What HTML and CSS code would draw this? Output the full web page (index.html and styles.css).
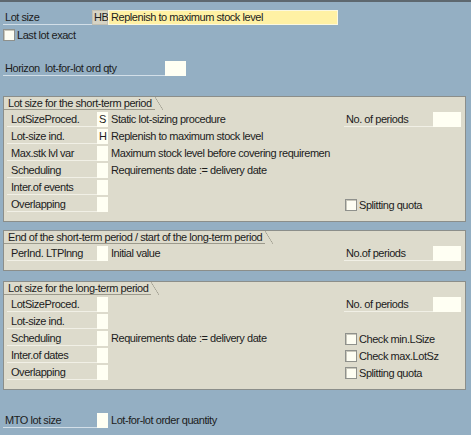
FILE: index.html
```html
<!DOCTYPE html>
<html>
<head>
<meta charset="utf-8">
<link rel="stylesheet" href="styles.css">
</head>
<body>
<div class="topbar"></div>

<div class="hrow r-lotsize">
  <div class="hlabel w-lot">Lot size</div>
  <div class="field ro">HB</div>
  <div class="field yellow">Replenish to maximum stock level</div>
</div>

<div class="hrow r-last">
  <span class="cb"></span><span class="cbtext">Last lot exact</span>
</div>

<div class="hrow r-horizon">
  <div class="hlabel w-hor">Horizon  lot-for-lot ord qty</div>
  <div class="field in w-hin"></div>
</div>

<section class="panel p1">
  <div class="ptitle"><span class="tab">Lot size for the short-term period</span></div>
  <div class="prow">
    <div class="plabel">LotSizeProced.</div><div class="field in">S</div><div class="desc">Static lot-sizing procedure</div>
    <div class="plabel rlabel">No. of periods</div><div class="field in"></div>
  </div>
  <div class="prow">
    <div class="plabel">Lot-size ind.</div><div class="field in">H</div><div class="desc">Replenish to maximum stock level</div>
  </div>
  <div class="prow">
    <div class="plabel">Max.stk lvl var</div><div class="field in"></div><div class="desc">Maximum stock level before covering requiremen</div>
  </div>
  <div class="prow">
    <div class="plabel">Scheduling</div><div class="field in"></div><div class="desc">Requirements date := delivery date</div>
  </div>
  <div class="prow">
    <div class="plabel">Inter.of events</div><div class="field in"></div><div class="desc"></div>
  </div>
  <div class="prow">
    <div class="plabel">Overlapping</div><div class="field in"></div><div class="desc"></div>
    <div class="check"><span class="cb"></span><span class="cbtext">Splitting quota</span></div>
  </div>
</section>

<section class="panel p2">
  <div class="ptitle"><span class="tab">End of the short-term period / start of the long-term period</span></div>
  <div class="prow">
    <div class="plabel">PerInd. LTPlnng</div><div class="field in"></div><div class="desc">Initial value</div>
    <div class="plabel rlabel">No.of periods</div><div class="field in"></div>
  </div>
</section>

<section class="panel p3">
  <div class="ptitle"><span class="tab">Lot size for the long-term period</span></div>
  <div class="prow">
    <div class="plabel">LotSizeProced.</div><div class="field in"></div><div class="desc"></div>
    <div class="plabel rlabel">No. of periods</div><div class="field in"></div>
  </div>
  <div class="prow">
    <div class="plabel">Lot-size ind.</div><div class="field in"></div><div class="desc"></div>
  </div>
  <div class="prow">
    <div class="plabel">Scheduling</div><div class="field in"></div><div class="desc">Requirements date := delivery date</div>
    <div class="check"><span class="cb"></span><span class="cbtext">Check min.LSize</span></div>
  </div>
  <div class="prow">
    <div class="plabel">Inter.of dates</div><div class="field in"></div><div class="desc"></div>
    <div class="check"><span class="cb"></span><span class="cbtext">Check max.LotSz</span></div>
  </div>
  <div class="prow">
    <div class="plabel">Overlapping</div><div class="field in"></div><div class="desc"></div>
    <div class="check"><span class="cb"></span><span class="cbtext">Splitting quota</span></div>
  </div>
</section>

<div class="hrow r-mto">
  <div class="hlabel w-mto">MTO lot size</div>
  <div class="field in w-mtoin"></div>
  <div class="desc">Lot-for-lot order quantity</div>
</div>
</body>
</html>
```

FILE: styles.css
```css
* { box-sizing: border-box; }
html, body { margin: 0; padding: 0; }
body {
  width: 471px;
  height: 435px;
  overflow: hidden;
  background: #94afc3;
  font-family: "Liberation Sans", Arial, sans-serif;
  font-size: 11px;
  letter-spacing: -0.45px;
  color: #1c1c1c;
}
.topbar { height: 2px; background: #5e686f; }

.hrow { display: flex; align-items: stretch; height: 15px; margin-left: 3px; }
.r-lotsize { margin-top: 8px; }
.r-last { margin-top: 4px; height: 12px; align-items: center; margin-left: 3px; }
.r-horizon { margin-top: 20px; }
.r-mto { margin-top: 23px; }

.hlabel {
  height: 15px;
  line-height: 14px;
  padding-left: 2px;
  border-bottom: 1px solid #d3dfe8;
  white-space: pre;
}
.w-lot { width: 89px; }
.w-hor { width: 162px; }
.w-mto { width: 94px; }

.field {
  height: 15px;
  line-height: 14px;
  white-space: pre;
}
.field.ro {
  width: 16px;
  background: #d6d3c4;
  border: 1px solid #c4c1b3;
  padding-left: 1px;
  line-height: 13px;
}
.field.yellow {
  width: 230px;
  background: #fff1a4;
  border: 1px solid #fbf8e0;
  padding-left: 2px;
  line-height: 13px;
}
.field.in {
  background: #fffff3;
  padding-left: 3px;
}
.w-hin { width: 21px; }
.w-mtoin { width: 11px; }
.r-mto .desc { padding-left: 3px; line-height: 14px; }

.cb {
  display: inline-block;
  width: 12px;
  height: 12px;
  background: #fdfdf2;
  border: 1px solid #8f918c;
  box-shadow: inset 1px 1px 0 #c9c8bc;
  flex: none;
}
.cbtext { margin-left: 2px; line-height: 12px; }

.panel {
  margin-left: 3px;
  width: 463px;
  background: #dddbcc;
  border: 1px solid #8b8e8a;
  padding: 0 0 7px 3px;
}
.p1 { margin-top: 20px; }
.p2 { margin-top: 8px; }
.p3 { margin-top: 10px; }

.ptitle { height: 13px; margin-left: -3px; margin-bottom: 2px; }
.tab {
  position: relative;
  display: inline-block;
  height: 13px;
  line-height: 12px;
  padding: 0 3px 0 4px;
  border-bottom: 1px solid #9c9a8c;
}
.tab::after {
  content: "";
  position: absolute;
  top: 0;
  right: -8px;
  width: 8px;
  height: 13px;
  background: linear-gradient(to top right, transparent calc(50% - 0.6px), #9c9a8c 50%, transparent calc(50% + 0.6px));
}

.prow {
  display: grid;
  grid-template-columns: 90px 11px 236px 89px 28px;
  height: 17px;
}
.prow > * { height: 15px; }
.plabel {
  line-height: 14px;
  padding-left: 4px;
  border-bottom: 1px solid #f1f0e6;
  white-space: nowrap;
}
.rlabel { padding-left: 2px; }
.prow .field.in { padding-left: 2px; }
.desc { padding-left: 3px; line-height: 14px; white-space: nowrap; }
.check {
  grid-column: 4 / 6;
  display: flex;
  align-items: center;
  padding-left: 1px;
}
```
